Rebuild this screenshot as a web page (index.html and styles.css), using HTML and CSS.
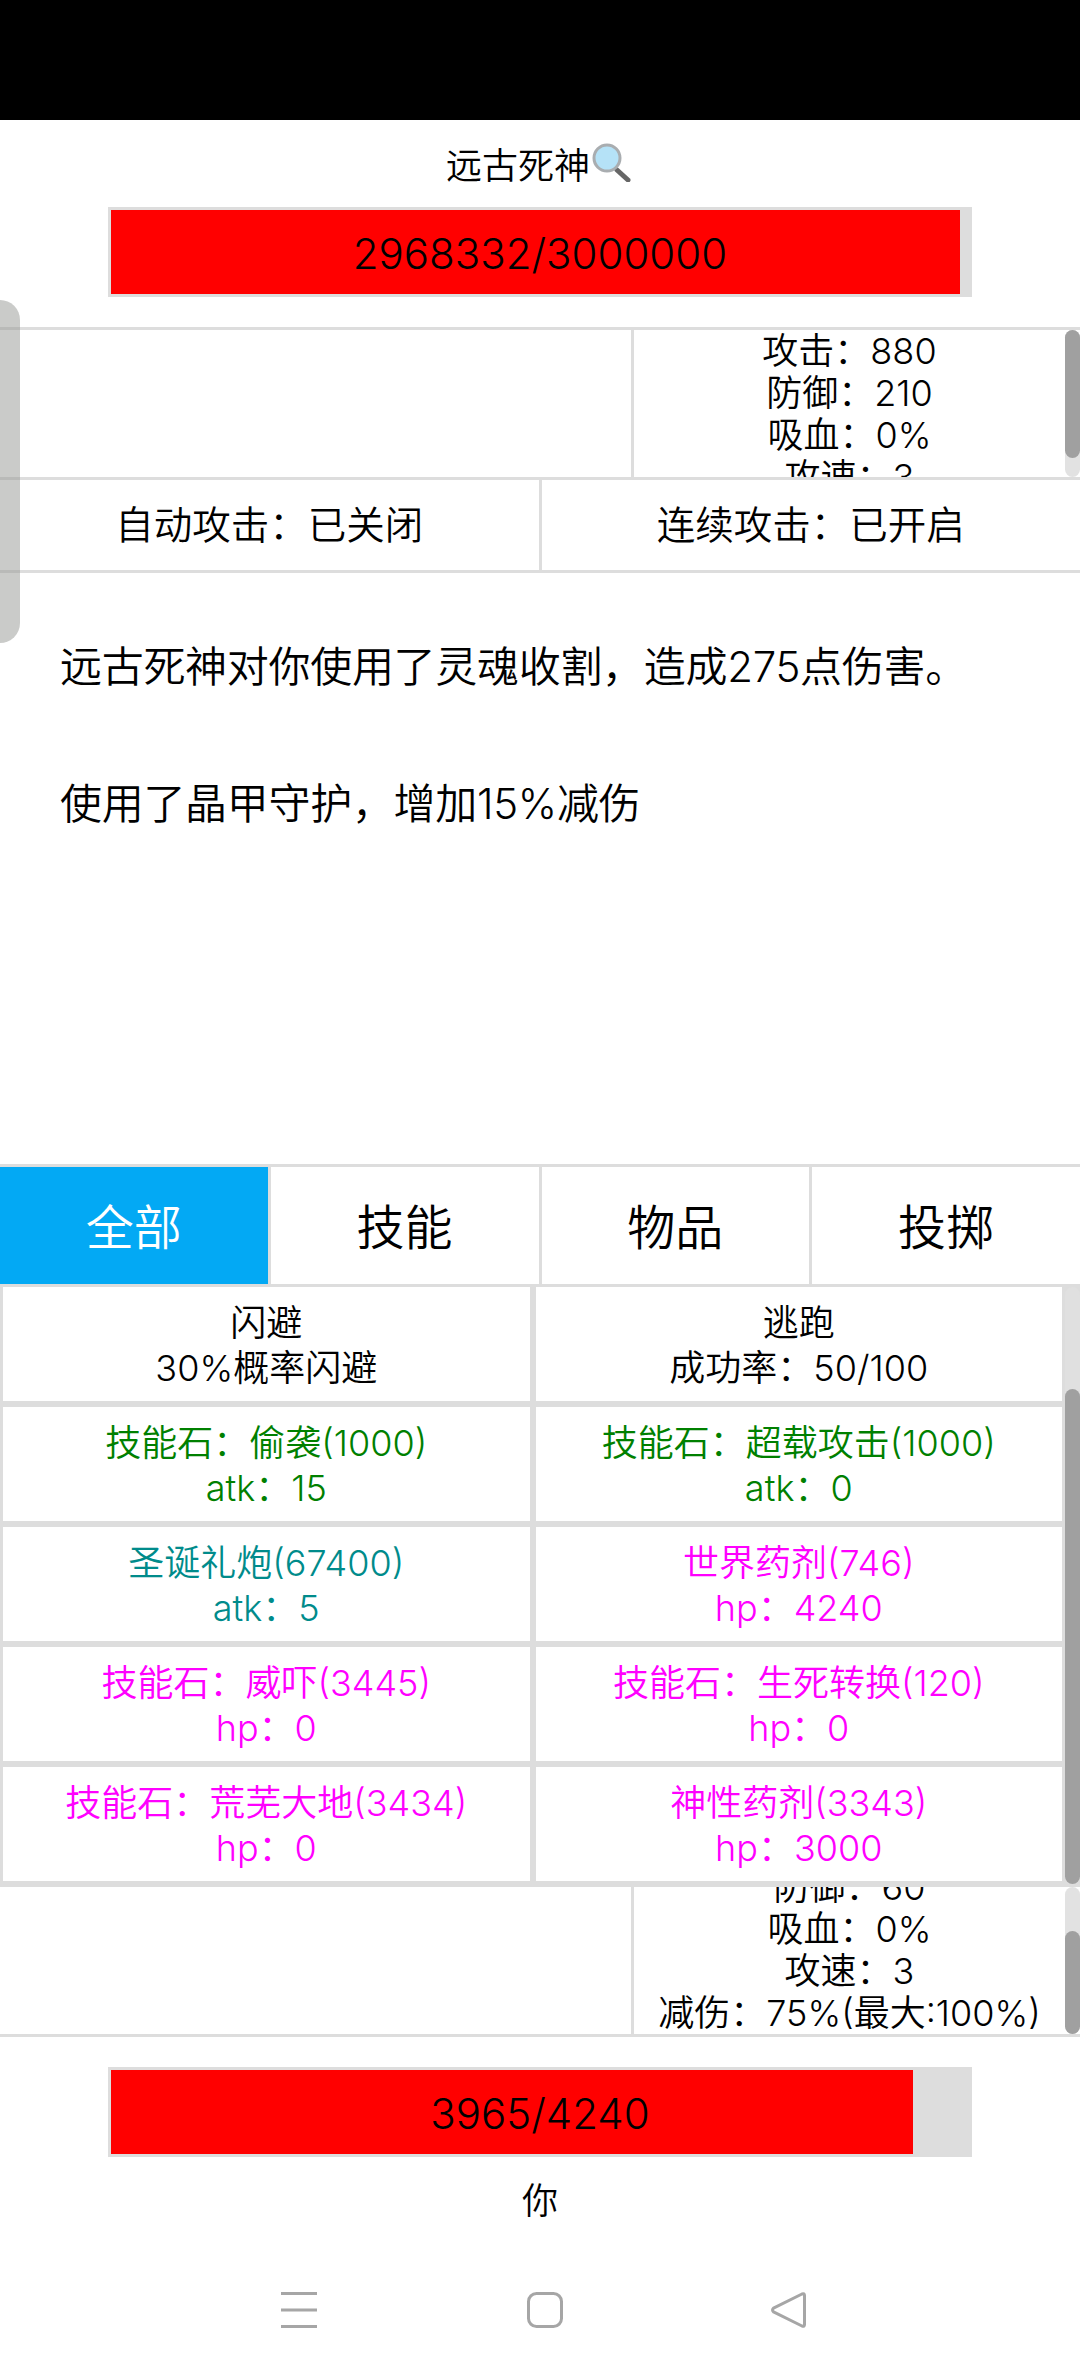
FILE: index.html
```html
<!DOCTYPE html>
<html lang="zh">
<head>
<meta charset="utf-8">
<title>远古死神</title>
<link rel="stylesheet" href="styles.css">
</head>
<body>
<div class="screen">
  <div class="status"></div>
  <div class="handle"></div>

  <header class="title">
    <span>远古死神</span>
    <svg class="lens" viewBox="0 0 40 39" aria-hidden="true">
      <path d="M25 27 L36 37" stroke="#666" stroke-width="5" stroke-linecap="round"/>
      <circle cx="15" cy="15" r="13" fill="#b5e2f7" stroke="#a9adb0" stroke-width="3"/>
    </svg>
  </header>
  <div class="bar-row"><div class="bar"><div class="fill" style="width:98.94%"></div><span class="bar-text">2968332/3000000</span></div></div>

  <section class="stats enemy">
    <div class="portrait"></div>
    <div class="stat-col">
      <div class="stat-text"><div>攻击：880</div><div>防御：210</div><div>吸血：0%</div><div>攻速：3</div></div>
      <div class="sb enemy-track"><div class="sb-thumb enemy-thumb"></div></div>
    </div>
  </section>

  <section class="toggles">
    <div class="toggle">自动攻击：已关闭</div>
    <div class="toggle">连续攻击：已开启</div>
  </section>

  <section class="log">
    <p>远古死神对你使用了灵魂收割，造成275点伤害。</p>
    <p>使用了晶甲守护，增加15%减伤</p>
  </section>

  <nav class="tabs">
    <div class="tab active">全部</div>
    <div class="tab">技能</div>
    <div class="tab">物品</div>
    <div class="tab">投掷</div>
  </nav>

  <section class="actions">
    <div class="grid">
      <div class="cell"><div>闪避</div><div>30%概率闪避</div></div>
      <div class="cell"><div>逃跑</div><div>成功率：50/100</div></div>
      <div class="cell green"><div>技能石：偷袭(1000)</div><div>atk：15</div></div>
      <div class="cell green"><div>技能石：超载攻击(1000)</div><div>atk：0</div></div>
      <div class="cell teal"><div>圣诞礼炮(67400)</div><div>atk：5</div></div>
      <div class="cell pink"><div>世界药剂(746)</div><div>hp：4240</div></div>
      <div class="cell pink"><div>技能石：威吓(3445)</div><div>hp：0</div></div>
      <div class="cell pink"><div>技能石：生死转换(120)</div><div>hp：0</div></div>
      <div class="cell pink"><div>技能石：荒芜大地(3434)</div><div>hp：0</div></div>
      <div class="cell pink"><div>神性药剂(3343)</div><div>hp：3000</div></div>
    </div>
    <div class="sb grid-track"><div class="sb-thumb grid-thumb"></div></div>
  </section>

  <section class="stats player">
    <div class="portrait"></div>
    <div class="stat-col">
      <div class="stat-text bottom"><div>防御：60</div><div>吸血：0%</div><div>攻速：3</div><div>减伤：75%(最大:100%)</div></div>
      <div class="sb player-track"><div class="sb-thumb player-thumb"></div></div>
    </div>
  </section>

  <div class="bar-row lower"><div class="bar"><div class="fill" style="width:93.5%"></div><span class="bar-text">3965/4240</span></div></div>
  <div class="name">你</div>

  <footer class="navbar">
    <svg class="nav-icon" viewBox="0 0 36 36" aria-hidden="true"><path d="M0 1.5H36M0 18H36M0 34.5H36" stroke="#a6a6a6" stroke-width="3" fill="none"/></svg>
    <svg class="nav-icon" viewBox="0 0 36 36" aria-hidden="true"><rect x="2.5" y="1.5" width="33" height="33" rx="8" stroke="#a6a6a6" stroke-width="3" fill="none"/></svg>
    <svg class="nav-icon" viewBox="0 0 36 36" aria-hidden="true"><path d="M33.5 3.5 Q33.5 1 31 2 L2.5 16.2 Q0.5 18 2.5 19.8 L31 34 Q33.5 35 33.5 32.5 Z" stroke="#a6a6a6" stroke-width="3" fill="none" stroke-linejoin="round"/></svg>
  </footer>
</div>
</body>
</html>
```
FILE: styles.css
```css
* { box-sizing: border-box; }
html, body { margin: 0; padding: 0; background: #fff; }
body { font-family: "Inter", "Noto Sans CJK SC", sans-serif; font-weight: 350; color: #000; }
.screen { position: relative; width: 1080px; height: 2376px; overflow: hidden; display: flex; flex-direction: column; }
.status { height: 120px; background: #000; flex: none; }
.handle { position: absolute; left: 0; top: 300px; width: 20px; height: 343px; background: rgba(150, 152, 148, .5); border-radius: 0 20px 20px 0; z-index: 5; }

.title { height: 87px; flex: none; display: flex; justify-content: center; align-items: center; font-size: 36px; padding-right: 2px; padding-bottom: 2px; }
.lens { width: 40px; height: 39px; margin-left: 2px; }

.bar-row { flex: none; display: flex; justify-content: center; }
.bar { position: relative; width: 864px; height: 90px; border: 3px solid #ddd; background: #ddd; display: flex; align-items: center; justify-content: center; font-size: 42px; padding-top: 2px; }
.fill { position: absolute; left: 0; top: 0; bottom: 0; background: #f00; }
.bar-text { position: relative; }
.lower { margin-top: 30px; }

.stats { flex: none; display: flex; border-bottom: 3px solid #ddd; }
.enemy { margin-top: 30px; height: 153px; border-top: 3px solid #ddd; }
.player { height: 150px; }
.portrait { width: 634px; border-right: 3px solid #ddd; }
.stat-col { position: relative; flex: 1; min-width: 0; overflow: hidden; display: flex; flex-direction: column; }
.stat-text { flex: 1; min-height: 0; overflow: hidden; padding-right: 15px; text-align: center; font-size: 36px; line-height: 42px; }
.stat-text.bottom { display: flex; flex-direction: column; justify-content: flex-end; }

.sb { position: absolute; right: 0; width: 15px; background: #e2e2e2; border-radius: 8px; }
.sb-thumb { position: absolute; left: 0; right: 0; background: #a0a0a0; border-radius: 8px; }
.enemy-track { top: 0; height: 147px; }
.enemy-thumb { top: 0; height: 128px; }
.player-track { top: 0; height: 147px; }
.player-thumb { bottom: 0; height: 103px; }

.toggles { flex: none; height: 93px; display: flex; border-bottom: 3px solid #ddd; }
.toggle { flex: 1; display: flex; align-items: center; justify-content: center; font-size: 38.5px; padding-bottom: 7px; }
.toggle + .toggle { border-left: 3px solid #ddd; }

.log { flex: none; height: 591px; padding: 0 60px; font-size: 42px; line-height: 60px; letter-spacing: -0.3px; }
.log p { margin: 64px 0 0; }
.log p + p { margin-top: 77px; }

.tabs { flex: none; height: 123px; display: flex; border-top: 3px solid #ddd; border-bottom: 3px solid #ddd; }
.tab { flex: 1; display: flex; align-items: center; justify-content: center; font-size: 48px; padding-bottom: 4px; }
.tab + .tab { border-left: 3px solid #ddd; }
.tab.active { background: #03a9f4; color: #fff; }

.actions { position: relative; flex: none; height: 600px; background: #ddd; padding-right: 18px; }
.grid { display: grid; grid-template-columns: 1fr 1fr; gap: 6px; padding-left: 3px; }
.cell { height: 114px; background: #fff; display: flex; flex-direction: column; align-items: center; justify-content: center; font-size: 36px; line-height: 45px; text-align: center; padding-top: 3px; }
.green { color: #008000; }
.teal { color: #008b8b; }
.pink { color: #f0f; }
.grid-track { top: 0; bottom: 3px; background: #e0e0e0; }
.grid-thumb { top: 102px; bottom: 0; }

.name { flex: none; height: 82px; display: flex; align-items: center; justify-content: center; font-size: 36px; }
.navbar { flex: 1; display: flex; justify-content: center; gap: 209px; padding-top: 53px; padding-left: 8px; }
.nav-icon { width: 36px; height: 36px; overflow: visible; }
```
